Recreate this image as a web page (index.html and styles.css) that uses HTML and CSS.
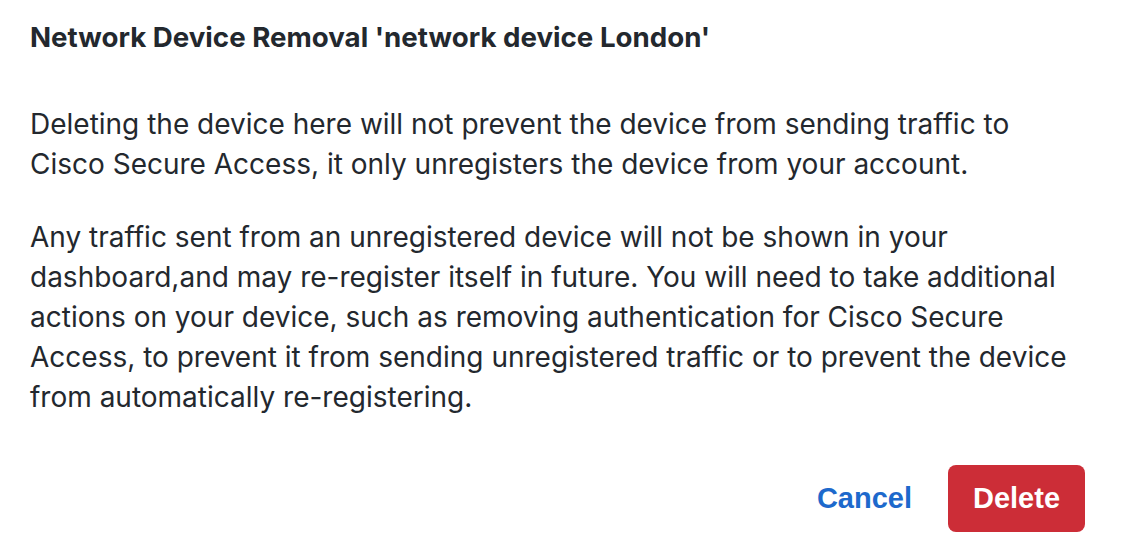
FILE: index.html
```html
<!DOCTYPE html>
<html lang="en">
<head>
<meta charset="utf-8">
<title>Network Device Removal</title>
<link rel="stylesheet" href="styles.css">
</head>
<body>
<div class="dialog">
  <h2 class="dialog-title">Network Device Removal 'network device London'</h2>
  <div class="dialog-body">
    <p>Deleting the device here will not prevent the device from sending traffic to Cisco Secure Access, it only unregisters the device from your account.</p>
    <p>Any traffic sent from an unregistered device will not be shown in your dashboard,and may re-register itself in future. You will need to take additional actions on your device, such as removing authentication for Cisco Secure Access, to prevent it from sending unregistered traffic or to prevent the device from automatically re-registering.</p>
  </div>
  <div class="dialog-footer">
    <button class="btn btn-link">Cancel</button>
    <button class="btn btn-danger">Delete</button>
  </div>
</div>
</body>
</html>
```
FILE: styles.css
```css
html, body {
  margin: 0;
  padding: 0;
  background: #ffffff;
}
.dialog {
  width: 1124px;
  height: 556px;
  box-sizing: border-box;
  padding: 20px 39px 0 30px;
  font-family: Inter, "Noto Sans", sans-serif;
  color: #23282e;
  display: flex;
  flex-direction: column;
}
.dialog-title {
  margin: 0;
  font-size: 27.7px;
  line-height: 34px;
  font-weight: 700;
}
.dialog-body {
  margin-top: 50px;
  font-size: 28px;
  line-height: 40px;
}
.dialog-body p {
  margin: 0 0 33px 0;
}
.dialog-body p:last-child {
  margin-bottom: 0;
}
.dialog-footer {
  margin-top: 48px;
  display: flex;
  justify-content: flex-end;
  align-items: center;
  gap: 36px;
}
.btn {
  font-family: "Liberation Sans", Arial, sans-serif;
  font-weight: 700;
  font-size: 29px;
  border: none;
  cursor: pointer;
}
.btn-link {
  background: none;
  color: #1d69cc;
  padding: 0;
}
.btn-danger {
  background: #cc2d37;
  color: #ffffff;
  width: 137px;
  height: 67px;
  border-radius: 8px;
  padding: 0;
}
```
